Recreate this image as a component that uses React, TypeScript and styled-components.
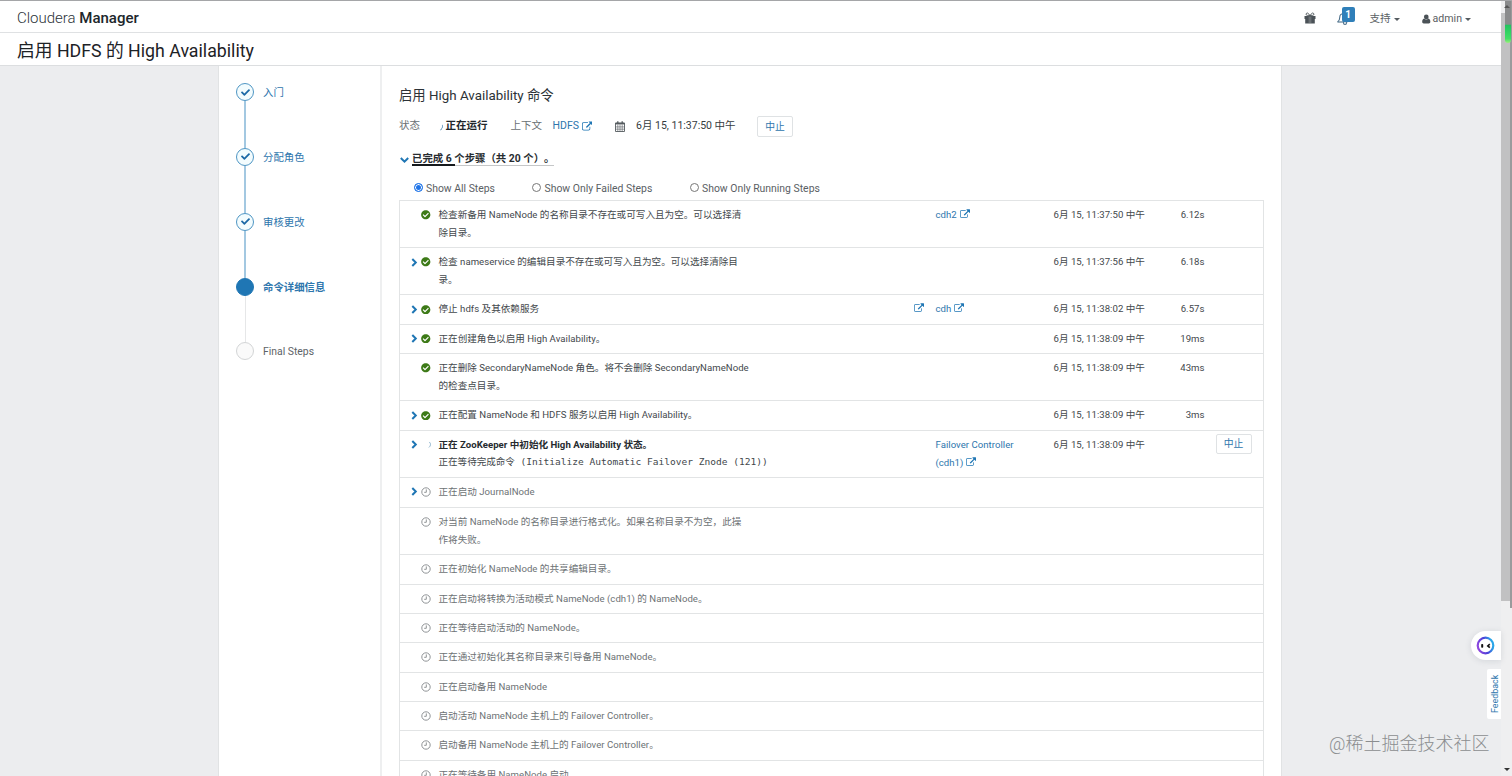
import React from 'react';
import styled, { createGlobalStyle, css } from 'styled-components';
import { FaCheck, FaCheckCircle } from 'react-icons/fa';

const LINK = '#2e76ad';
const BLUE = '#1f76b4';

const GlobalStyle = createGlobalStyle`
  * { box-sizing: border-box; }
  html, body { margin: 0; height: 776px; overflow: hidden; }
  body {
    background: #ecedef;
    color: #42484c;
    font-family: Roboto, "Noto Sans CJK SC", sans-serif;
    font-size: 10.6px;
    text-spacing-trim: space-all;
  }
`;

const Frame = styled.div`
  position: relative;
  display: flex;
  height: 776px;
  width: 1512px;
  overflow: hidden;
  border-top: 1px solid #a5a6a8;
`;

const Page = styled.div`
  display: flex;
  flex-direction: column;
  width: 1501px;
  flex: none;
`;

const TopBar = styled.header`
  display: flex;
  align-items: center;
  justify-content: space-between;
  height: 32px;
  flex: none;
  padding: 3px 30px 0 17px;
  background: #fff;
  border-bottom: 1px solid #dfe1e3;
`;

const Brand = styled.div`
  font-size: 15px;
  line-height: 20px;
  font-weight: 300;
  color: #2c3338;
  b { font-weight: 500; color: #20262b; }
`;

const TopNav = styled.nav`
  display: flex;
  align-items: center;
  height: 20px;
  color: #5b6165;
  line-height: 20px;
`;

const GiftItem = styled.span`
  display: flex;
  width: 33px;
  color: #4b5257;
`;

const BellItem = styled.span`
  position: relative;
  display: flex;
  width: 33px;
  padding-top: 1px;
`;

const Badge = styled.span`
  position: absolute;
  left: 5px;
  top: -4px;
  width: 13px;
  height: 15px;
  border-radius: 2px;
  background: #2f7fb9;
  color: #fff;
  font-size: 10px;
  font-weight: 700;
  line-height: 15px;
  text-align: center;
`;

const NavItem = styled.span<{ $width: number; $gap: number }>`
  display: flex;
  align-items: center;
  gap: ${(p) => p.$gap}px;
  width: ${(p) => p.$width}px;
  padding-top: 1px;
  white-space: nowrap;
`;

const Caret = styled.i`
  margin: 1px 0 0 1px;
  border: 3px solid transparent;
  border-top-color: #555b60;
  border-bottom: 0;
`;

const TitleBar = styled.h1`
  margin: 0;
  height: 33px;
  flex: none;
  padding: 1px 17px 0;
  background: #fff;
  border-bottom: 1px solid #dcdee0;
  font-size: 17.75px;
  font-weight: 400;
  line-height: 35px;
  color: #1d2226;
`;

const Body = styled.div`
  display: flex;
  flex: 1;
  min-height: 0;
  width: 1064px;
  margin-left: 218px;
  background: #fff;
  border: solid #e1e3e4;
  border-width: 0 1px;
`;

const Wizard = styled.ol`
  width: 163px;
  flex: none;
  margin: 0;
  padding: 17px 0 0 17px;
  list-style: none;
  border-right: 2px solid #eeeff0;
`;

type StepState = 'done' | 'current' | 'future';

const StepItem = styled.li`
  display: flex;
  gap: 9px;
  height: 64.85px;
`;

const Rail = styled.div<{ $line: string }>`
  display: flex;
  flex-direction: column;
  align-items: center;
  width: 18px;
  &::after {
    content: '';
    width: ${(p) => (p.$line === '#e6e7e8' ? 1 : 2)}px;
    flex: 1;
    background: ${(p) => p.$line};
  }
`;

const Dot = styled.span<{ $state: StepState }>`
  display: flex;
  align-items: center;
  justify-content: center;
  width: 18px;
  height: 18px;
  border-radius: 50%;
  border: 1px solid #4f96c4;
  background: #f3fcfe;
  color: #1c69a6;
  ${(p) => p.$state === 'current' && css`background: ${BLUE}; border-color: ${BLUE};`}
  ${(p) => p.$state === 'future' && css`background: #fafafa; border-color: #d3d5d6;`}
`;

const StepLabel = styled.span<{ $state: StepState }>`
  line-height: 20px;
  font-size: 10.4px;
  color: ${(p) => (p.$state === 'future' ? '#5d6367' : LINK)};
  font-weight: ${(p) => (p.$state === 'current' ? 700 : 400)};
`;

const Main = styled.main`
  flex: 1;
  padding: 19px 17px 0;
  min-width: 0;
`;

const Heading = styled.h2`
  margin: 0;
  font-size: 13.35px;
  font-weight: 400;
  line-height: 21px;
  color: #2c3236;
`;

const StatusLine = styled.div`
  display: flex;
  align-items: center;
  height: 22px;
  margin-top: 9px;
  font-size: 10.5px;
  line-height: 20px;
  white-space: nowrap;
`;

const Field = styled.span<{ $width: number; $tone?: string; $bold?: boolean }>`
  display: flex;
  align-items: center;
  width: ${(p) => p.$width}px;
  color: ${(p) => p.$tone ?? '#363c40'};
  font-weight: ${(p) => (p.$bold ? 700 : 400)};
`;

const AbortButton = styled.button<{ $compact?: boolean }>`
  width: 36px;
  height: ${(p) => (p.$compact ? 20 : 21)}px;
  padding: 0;
  border: 1px solid #dfe2e4;
  border-radius: 2px;
  background: #fff;
  color: ${LINK};
  font: inherit;
  font-size: 9.8px;
  line-height: 17px;
`;

const Progress = styled.div`
  display: flex;
  align-items: flex-start;
  gap: 3px;
  margin: 13px 0 0 1px;
  height: 18px;
  font-weight: 700;
  font-size: 10.4px;
  color: #272c30;
`;

const ProgressText = styled.span`
  position: relative;
  display: block;
  width: 142px;
  height: 16px;
  line-height: 17px;
  white-space: nowrap;
  border-bottom: 1px solid #c5c7c8;
`;

const ProgressFill = styled.span`
  position: absolute;
  left: 0;
  bottom: -1px;
  width: 30%;
  height: 2px;
  background: #15191c;
`;

const Filters = styled.div`
  display: flex;
  align-items: center;
  height: 22px;
  margin-top: 9px;
  padding-left: 14.5px;
  font-size: 10.42px;
  color: #5a6064;
`;

const RadioLabel = styled.label<{ $width: number }>`
  display: flex;
  align-items: center;
  gap: 3.5px;
  width: ${(p) => p.$width}px;
  white-space: nowrap;
`;

const Radio = styled.span<{ $on?: boolean }>`
  width: 9px;
  height: 9px;
  flex: none;
  margin-top: -1px;
  border-radius: 50%;
  border: 1px solid ${(p) => (p.$on ? '#1f74e8' : '#777')};
  background: ${(p) => (p.$on ? '#1f74e8' : '#fff')};
  box-shadow: inset 0 0 0 1px #fff;
`;

const Table = styled.div`
  margin-top: 1px;
  width: 865px;
  border: solid #e2e4e5;
  border-width: 1px 1px 0;
  font-size: 9.6px;
  line-height: 17.7px;
`;

const Row = styled.div<{ $height: number; $pending: boolean }>`
  display: grid;
  grid-template-columns: 11px 13px 362px 110px 22px 118px 92px 65.5px 52px;
  height: ${(p) => p.$height}px;
  padding: 5px 0 0 11px;
  border-bottom: 1px solid #e2e4e5;
  color: ${(p) => (p.$pending ? '#6d7275' : '#43484c')};
  white-space: nowrap;
`;

const IconCell = styled.span`
  display: flex;
  align-items: center;
  height: 18px;
  color: #3d7a17;
`;

const Cell = styled.div<{ $right?: boolean; $pad?: number; $link?: boolean }>`
  padding-left: ${(p) => p.$pad ?? 0}px;
  text-align: ${(p) => (p.$right ? 'right' : 'left')};
  color: ${(p) => (p.$link ? LINK : 'inherit')};
`;

const ButtonCell = styled.div`
  margin-top: -2px;
  padding-left: 11px;
`;

const Latin = styled.span<{ $spacing: number }>`
  letter-spacing: ${(p) => p.$spacing}px;
`;

const TextLine = styled.div<{ $bold?: boolean }>`
  font-weight: ${(p) => (p.$bold ? 700 : 400)};
  color: ${(p) => (p.$bold ? '#262b2f' : 'inherit')};
`;

const Detail = styled.div`
  margin-top: -1px;
  font-family: "DejaVu Sans Mono", "Noto Sans CJK SC", monospace;
  font-size: 9.55px;
`;

const ScrollTrack = styled.div`
  position: relative;
  display: flex;
  flex-direction: column;
  align-items: center;
  justify-content: space-between;
  flex: 1;
  background: #efeff0;
  padding: 4px 0 5px;
`;

const Thumb = styled.div`
  position: absolute;
  left: 0;
  top: 12px;
  width: 9px;
  height: 588px;
  background: #c1c1c2;
`;

const SideShade = styled.div`
  position: absolute;
  right: 0;
  top: 0;
  width: 2px;
  height: 607px;
  background: #9a9b9c;
`;

const Glow = styled.div`
  position: absolute;
  right: 1px;
  top: 0;
  width: 6px;
  height: 42px;
  border-radius: 0 0 3px 3px;
  background: linear-gradient(#8a8b8c 0 55%, #22c55e 58%, #43df66 90%, #9cf07c);
`;

const ScrollArrow = styled.i<{ $up?: boolean }>`
  position: relative;
  border: 3px solid transparent;
  ${(p) => (p.$up ? 'border-top: 0; border-bottom-color: #555;' : 'border-bottom: 0; border-top-color: #333;')}
`;

const Assistant = styled.div`
  position: absolute;
  left: 1471px;
  top: 630px;
  width: 30px;
  height: 29px;
  display: flex;
  align-items: center;
  padding-left: 5px;
  border-radius: 15px 0 0 15px;
  background: #fff;
  box-shadow: 0 1px 6px rgba(60, 70, 90, 0.14);
`;

const Feedback = styled.div`
  position: absolute;
  left: 1487px;
  top: 668px;
  width: 14px;
  height: 50px;
  background: #fff;
  border-radius: 0 2px 2px 0;
  color: ${LINK};
  font-size: 8.9px;
  line-height: 11px;
  text-align: center;
  writing-mode: vertical-lr;
  transform: rotate(180deg);
`;

const Watermark = styled.div`
  position: absolute;
  left: 1329px;
  top: 730px;
  font-size: 18px;
  line-height: 26px;
  font-weight: 300;
  color: #8b8d8f;
  white-space: nowrap;
`;

const Inline = styled.svg<{ $drop?: number; $ml?: number }>`
  flex: none;
  margin-left: ${(p) => p.$ml ?? 0}px;
  vertical-align: ${(p) => -(p.$drop ?? 0)}px;
`;

const External = ({ size = 10, ml = 3 }: { size?: number; ml?: number }) => (
  <Inline $drop={1} $ml={ml} width={size} height={size} viewBox="0 0 1792 1664" fill={BLUE}>
    <path d="M1408 928v320q0 119-84.5 203.5t-203.5 84.5h-832q-119 0-203.5-84.5t-84.5-203.5v-832q0-119 84.5-203.5t203.5-84.5h704q14 0 23 9t9 23v64q0 14-9 23t-23 9h-704q-66 0-113 47t-47 113v832q0 66 47 113t113 47h832q66 0 113-47t47-113v-320q0-14 9-23t23-9h64q14 0 23 9t9 23zm384-864v512q0 26-19 45t-45 19-45-19l-176-176-652 652q-10 10-23 10t-23-10l-114-114q-10-10-10-23t10-23l652-652-176-176q-19-19-19-45t19-45 45-19h512q26 0 45 19t19 45z" />
  </Inline>
);

const Chevron = ({ down }: { down?: boolean }) => (
  <Inline width={down ? 9 : 7} height={down ? 17 : 9} viewBox={down ? '0 0 9 17' : '0 0 7 9'} fill="none" stroke={BLUE} strokeWidth="2">
    <path d={down ? 'M.8 8l3.7 3.7L8.2 8' : 'M1.3 1l3.5 3.5L1.3 8'} />
  </Inline>
);

const Clock = () => (
  <Inline $ml={-1} width="10" height="10" viewBox="0 0 10 10" fill="none" stroke="#909497" strokeWidth="1">
    <circle cx="5" cy="5" r="4.2" />
    <path d="M5.3 2.4v2.9H3.2" />
  </Inline>
);

const RowSpinner = () => (
  <Inline $ml={2} width="7" height="7" viewBox="0 0 10 10" fill="none" stroke="#6c9dbf" strokeWidth="1">
    <path d="M7.6 1.4C10 3.5 10 7 7 9.2" />
  </Inline>
);

const StatusSpinner = styled.i`
  width: 9px;
  height: 9px;
  margin: 1px 3px 0 -2.5px;
  border: 1px solid transparent;
  border-right-color: #6c9dbf;
  border-radius: 50%;
  transform: rotate(20deg);
`;

const Gift = () => (
  <svg width="12" height="12" viewBox="0 0 12 12" fill="#4b5257">
    <path d="M.5 4h4.800v3H.5zM6.700 4h4.800v3H6.700zM1.200 7h4.100v4.500H1.200zM6.700 7h4.100v4.500H6.700zM5.300 4h1.400v7.500H5.300z" />
    <path d="M6 4C5 2 4.200 1 3.300 1c-1.600 0-1.600 2.400 0 2.400H8.700c1.600 0 1.600-2.400 0-2.400C7.800 1 7 2 6 4z" fill="none" stroke="#4b5257" strokeWidth=".9" />
    <path d="M5.200 4.500v7M6.800 4.500v7" stroke="#a9adaf" strokeWidth=".5" />
  </svg>
);

const Bell = () => (
  <svg width="13" height="13" viewBox="0 0 13 13" fill="none" stroke="#4b6f8a" strokeWidth="1.1">
    <path d="M.6 10c1.800-1.300 2.200-2.800 2.200-5 0-2 1.200-3.200 3.400-3.200" />
    <path d="M.6 10h9.800" />
    <circle cx="8" cy="10.900" r="1.500" fill="#fff" />
  </svg>
);

const UserIcon = () => (
  <svg width="9" height="10" viewBox="0 0 9 10" fill="#4b5257">
    <circle cx="4.500" cy="2.800" r="2.500" />
    <path d="M2.200 4.600C.8 4.900.2 6.400.2 8c0 1.200.7 1.800 1.600 1.800h5.400c.9 0 1.600-.6 1.600-1.800 0-1.600-.6-3.100-2-3.400-1.300 1.300-3.300 1.300-4.600 0z" />
  </svg>
);

const Calendar = () => (
  <svg width="10" height="11" viewBox="0 0 10 11" fill="none" stroke="#555b5f">
    <path d="M.5 2h9v8.500h-9z" strokeWidth=".9" />
    <path d="M.5 2.600h9" strokeWidth="1.600" />
    <path d="M2.800 3.500v7M5 3.500v7M7.200 3.500v7M.5 5.900h9M.5 8.200h9" strokeWidth=".6" />
    <path d="M2.800.2v2M7.200.2v2" strokeWidth="1.300" />
  </svg>
);

const RobotFace = () => (
  <svg width="19" height="19" viewBox="0 0 19 19">
    <defs>
      <linearGradient id="ring" x1="0" y1="1" x2="1" y2=".7">
        <stop offset="0" stopColor="#a04be0" />
        <stop offset=".6" stopColor="#4a3fd8" />
        <stop offset="1" stopColor="#2aa5e8" />
      </linearGradient>
    </defs>
    <circle cx="9.500" cy="9.500" r="7.800" fill="#fff" stroke="url(#ring)" strokeWidth="2.200" />
    <rect x="5.200" y="8" width="2" height="3.800" rx=".8" fill="#111" />
    <path d="M13.800 8.200l-2 1.700 2 1.700" fill="none" stroke="#111" strokeWidth="1.600" />
  </svg>
);

/** Splits mixed text so Latin words get their own tracking. */
const Mixed = ({ text, spacing = 0.03 }: { text: string; spacing?: number }) => (
  <>
    {text.split(/([\x21-\x7e]+(?: [\x21-\x7e]+)*)/).map((part, i) =>
      i % 2 ? <Latin key={i} $spacing={spacing}>{part}</Latin> : part,
    )}
  </>
);

interface CommandRow {
  height: number;
  state: 'ok' | 'running' | 'pending';
  lines: string[];
  detail?: string;
  expandable?: boolean;
  extraLink?: boolean;
  context?: string[];
  time?: string;
  duration?: string;
}

const rows: CommandRow[] = [
  { height: 47, state: 'ok', lines: ['检查新备用 NameNode 的名称目录不存在或可写入且为空。可以选择清', '除目录。'], context: ['cdh2'], time: '11:37:50', duration: '6.12s' },
  { height: 47.4, state: 'ok', expandable: true, lines: ['检查 nameservice 的编辑目录不存在或可写入且为空。可以选择清除目', '录。'], time: '11:37:56', duration: '6.18s' },
  { height: 29.2, state: 'ok', expandable: true, lines: ['停止 hdfs 及其依赖服务'], extraLink: true, context: ['cdh'], time: '11:38:02', duration: '6.57s' },
  { height: 29.6, state: 'ok', expandable: true, lines: ['正在创建角色以启用 High Availability。'], time: '11:38:09', duration: '19ms' },
  { height: 47.3, state: 'ok', lines: ['正在删除 SecondaryNameNode 角色。将不会删除 SecondaryNameNode', '的检查点目录。'], time: '11:38:09', duration: '43ms' },
  { height: 29.5, state: 'ok', expandable: true, lines: ['正在配置 NameNode 和 HDFS 服务以启用 High Availability。'], time: '11:38:09', duration: '3ms' },
  { height: 47, state: 'running', expandable: true, lines: ['正在 ZooKeeper 中初始化 High Availability 状态。'], detail: '正在等待完成命令 (Initialize Automatic Failover Znode (121))', context: ['Failover Controller', '(cdh1)'], time: '11:38:09' },
  { height: 30, state: 'pending', expandable: true, lines: ['正在启动 JournalNode'] },
  { height: 47, state: 'pending', lines: ['对当前 NameNode 的名称目录进行格式化。如果名称目录不为空，此操', '作将失败。'] },
  { height: 30, state: 'pending', lines: ['正在初始化 NameNode 的共享编辑目录。'] },
  { height: 29, state: 'pending', lines: ['正在启动将转换为活动模式 NameNode (cdh1) 的 NameNode。'] },
  { height: 29, state: 'pending', lines: ['正在等待启动活动的 NameNode。'] },
  { height: 30, state: 'pending', lines: ['正在通过初始化其名称目录来引导备用 NameNode。'] },
  { height: 29, state: 'pending', lines: ['正在启动备用 NameNode'] },
  { height: 29, state: 'pending', lines: ['启动活动 NameNode 主机上的 Failover Controller。'] },
  { height: 30, state: 'pending', lines: ['启动备用 NameNode 主机上的 Failover Controller。'] },
  { height: 29, state: 'pending', lines: ['正在等待备用 NameNode 启动'] },
];

const steps: { label: string; state: StepState }[] = [
  { label: '入门', state: 'done' },
  { label: '分配角色', state: 'done' },
  { label: '审核更改', state: 'done' },
  { label: '命令详细信息', state: 'current' },
  { label: 'Final Steps', state: 'future' },
];

const lineColor = { done: '#a3c8e1', current: '#e6e7e8', future: 'transparent' };

const OkIcon = styled(FaCheckCircle)`
  margin-left: -1px;
`;

const CommandRowView = ({ row }: { row: CommandRow }) => (
  <Row $height={row.height} $pending={row.state === 'pending'}>
    <IconCell>{row.expandable && <Chevron />}</IconCell>
    <IconCell>
      {row.state === 'ok' && <OkIcon size={9.5} />}
      {row.state === 'running' && <RowSpinner />}
      {row.state === 'pending' && <Clock />}
    </IconCell>
    <Cell $pad={3.5}>
      {row.lines.map((line) => (
        <TextLine key={line} $bold={row.state === 'running'}>
          <Mixed text={line} />
        </TextLine>
      ))}
      {row.detail && <Detail>{row.detail}</Detail>}
    </Cell>
    <Cell />
    <Cell $link>{row.extraLink && <External ml={6.5} />}</Cell>
    <Cell $link $pad={6.5}>
      {row.context?.map((line, i) => (
        <div key={line}>
          <Mixed text={line} />
          {i === row.context!.length - 1 && <External />}
        </div>
      ))}
    </Cell>
    <Cell $pad={6.5}>{row.time && <Mixed text={`6月 15, ${row.time} 中午`} />}</Cell>
    <Cell $right><Mixed text={row.duration ?? ''} /></Cell>
    <ButtonCell>{row.state === 'running' && <AbortButton $compact>中止</AbortButton>}</ButtonCell>
  </Row>
);

export default function App() {
  return (
    <>
      <GlobalStyle />
      <Frame>
        <Page>
          <TopBar>
            <Brand>Cloudera <b>Manager</b></Brand>
            <TopNav>
              <GiftItem><Gift /></GiftItem>
              <BellItem><Bell /><Badge>1</Badge></BellItem>
              <NavItem $width={52.5} $gap={2}>支持<Caret /></NavItem>
              <NavItem $width={49} $gap={2}><UserIcon />admin<Caret /></NavItem>
            </TopNav>
          </TopBar>
          <TitleBar>启用 HDFS 的 High Availability</TitleBar>
          <Body>
            <Wizard>
              {steps.map((step) => (
                <StepItem key={step.label}>
                  <Rail $line={lineColor[step.state]}>
                    <Dot $state={step.state}>{step.state === 'done' && <FaCheck size={9} />}</Dot>
                  </Rail>
                  <StepLabel $state={step.state}>{step.label}</StepLabel>
                </StepItem>
              ))}
            </Wizard>
            <Main>
              <Heading>启用 High Availability 命令</Heading>
              <StatusLine>
                <Field $width={37} $tone="#6a6f73">状态</Field>
                <Field $width={74.5} $tone="#20262a" $bold><StatusSpinner />正在运行</Field>
                <Field $width={42} $tone="#6a6f73">上下文</Field>
                <Field $width={62.5} $tone={LINK}>HDFS<External size={10.5} /></Field>
                <Field $width={21}><Calendar /></Field>
                <Field $width={121}>6月 15, 11:37:50 中午</Field>
                <AbortButton>中止</AbortButton>
              </StatusLine>
              <Progress>
                <Chevron down />
                <ProgressText>已完成 6 个步骤（共 20 个）。<ProgressFill /></ProgressText>
              </Progress>
              <Filters>
                <RadioLabel $width={118.5}><Radio $on />Show All Steps</RadioLabel>
                <RadioLabel $width={157.5}><Radio />Show Only Failed Steps</RadioLabel>
                <RadioLabel $width={140}><Radio />Show Only Running Steps</RadioLabel>
              </Filters>
              <Table>
                {rows.map((row) => <CommandRowView key={row.lines[0]} row={row} />)}
              </Table>
            </Main>
          </Body>
        </Page>
        <ScrollTrack>
          <Thumb />
          <SideShade />
          <Glow />
          <ScrollArrow $up />
          <ScrollArrow />
        </ScrollTrack>
        <Assistant><RobotFace /></Assistant>
        <Feedback>Feedback</Feedback>
        <Watermark>@稀土掘金技术社区</Watermark>
      </Frame>
    </>
  );
}
